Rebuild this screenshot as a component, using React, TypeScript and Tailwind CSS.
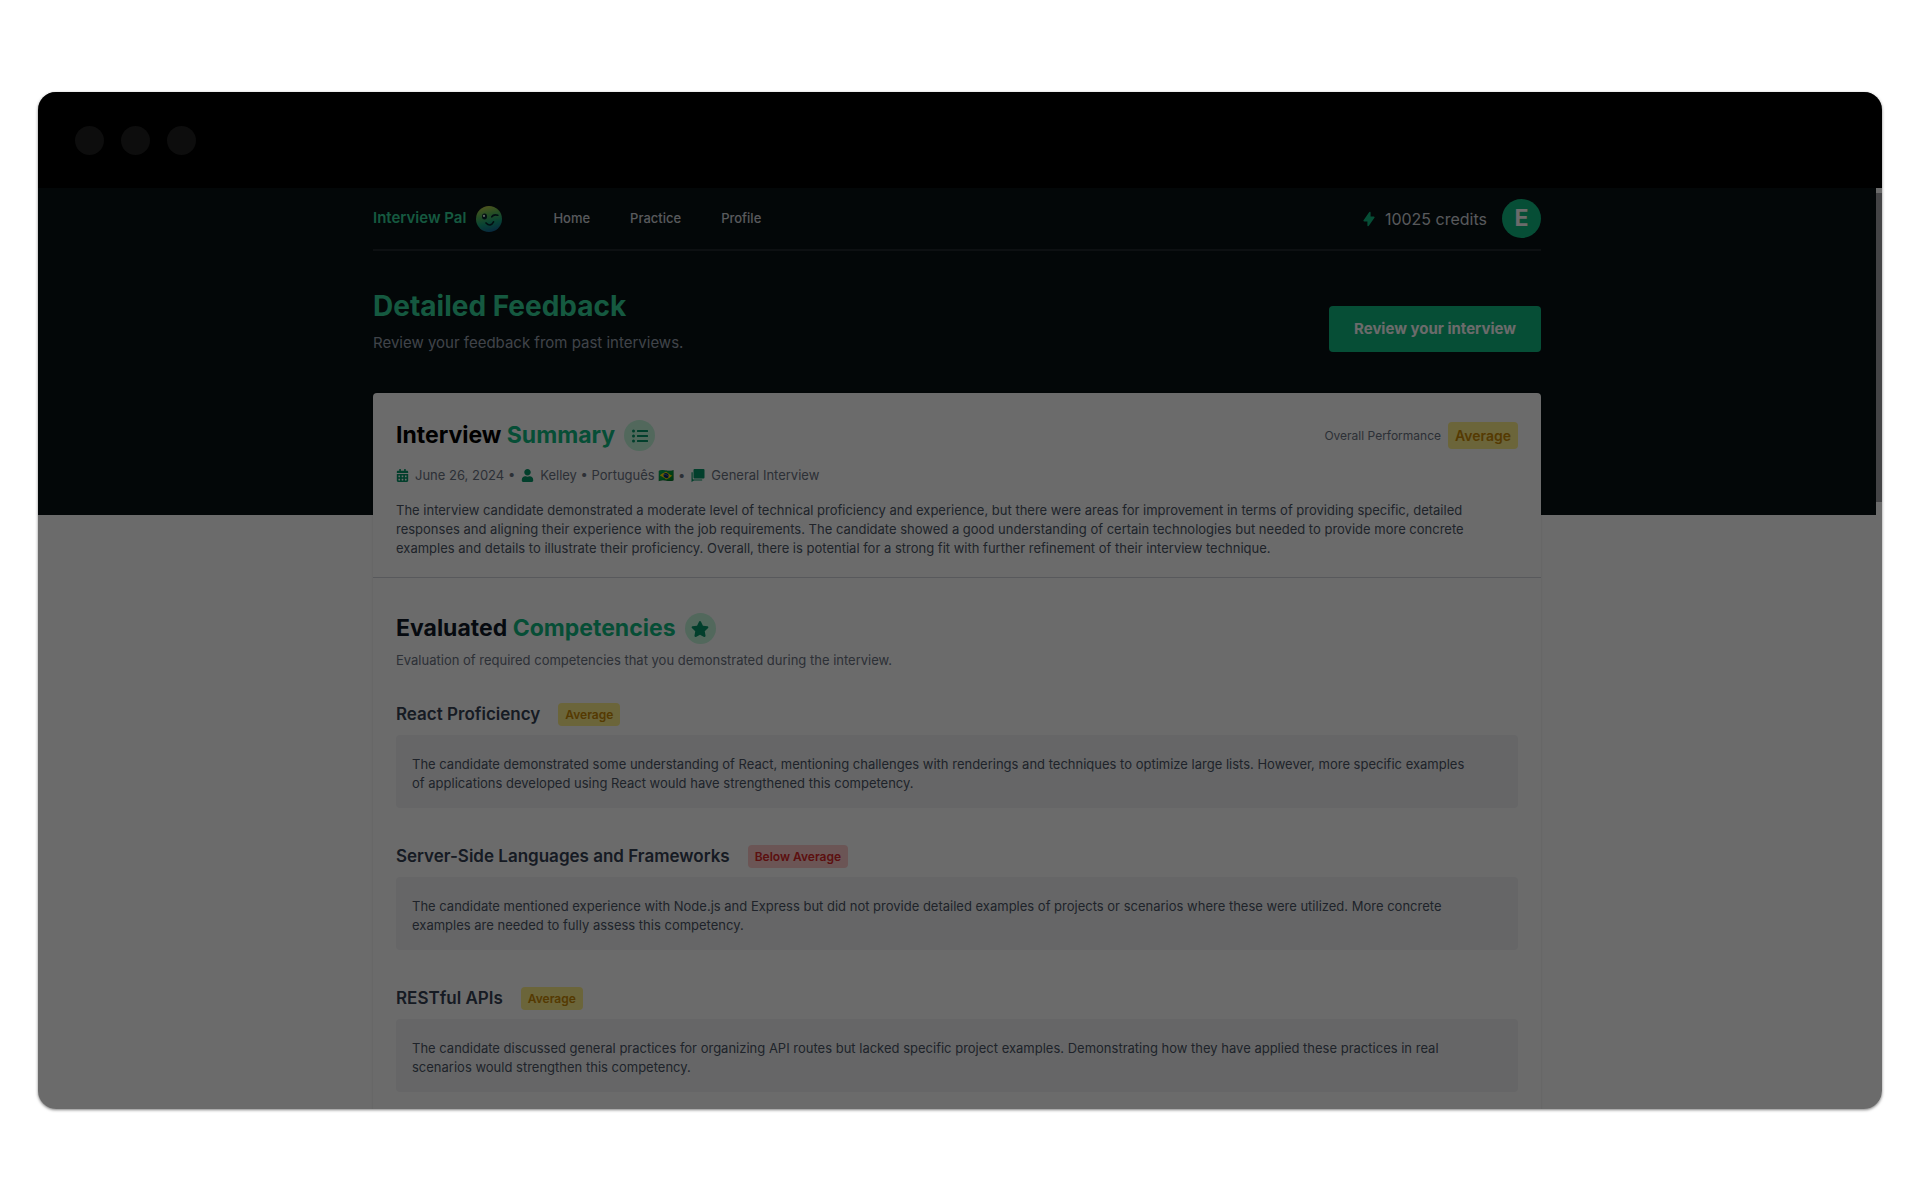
import { FaCalendarAlt, FaUser, FaListUl, FaStar } from "react-icons/fa";
import { HiLightningBolt } from "react-icons/hi";

type Rating = "Average" | "Below Average";

const competencies: { title: string; rating: Rating; text: string }[] = [
  {
    title: "React Proficiency",
    rating: "Average",
    text: "The candidate demonstrated some understanding of React, mentioning challenges with renderings and techniques to optimize large lists. However, more specific examples of applications developed using React would have strengthened this competency.",
  },
  {
    title: "Server-Side Languages and Frameworks",
    rating: "Below Average",
    text: "The candidate mentioned experience with Node.js and Express but did not provide detailed examples of projects or scenarios where these were utilized. More concrete examples are needed to fully assess this competency.",
  },
  {
    title: "RESTful APIs",
    rating: "Average",
    text: "The candidate discussed general practices for organizing API routes but lacked specific project examples. Demonstrating how they have applied these practices in real scenarios would strengthen this competency.",
  },
];

const ratingStyle: Record<Rating, string> = {
  Average: "bg-[#fef08a] text-[#ca8a04]",
  "Below Average": "bg-[#fecaca] text-[#dc2626]",
};

function Logo() {
  return (
    <svg viewBox="0 0 26 26" className="size-[26px]" aria-hidden="true">
      <defs>
        <linearGradient id="face" x1="0.4" y1="0" x2="0.65" y2="1">
          <stop offset="0" stopColor="#b9c94a" />
          <stop offset="0.3" stopColor="#5fbb55" />
          <stop offset="0.65" stopColor="#14a07c" />
          <stop offset="1" stopColor="#155f96" />
        </linearGradient>
      </defs>
      <circle cx="13" cy="13" r="13" fill="url(#face)" />
      <ellipse cx="8.500" cy="10.500" rx="2.500" ry="2.900" fill="#06232b" />
      <circle cx="8" cy="9.900" r="1.100" fill="#e8fff4" />
      <path d="M15.800 10.800q1.700-2.800 6-1.600" fill="none" stroke="#06232b" strokeWidth="1.700" strokeLinecap="round" strokeLinejoin="round" />
      <path d="M10 17q4.500 4.500 7.500-1.200" fill="none" stroke="#06232b" strokeWidth="1.700" strokeLinecap="round" />
    </svg>
  );
}

function ChatIcon() {
  return (
    <svg viewBox="0 0 14 14" className="size-[14px] text-[#059669]" fill="currentColor" aria-hidden="true">
      <path d="M3.500 1h9a1 1 0 0 1 1 1v7.500a1 1 0 0 1-1 1h-9a1 1 0 0 1-1-1V2a1 1 0 0 1 1-1z" />
      <path d="M.5 4.200h1.200v6.300a.9.9 0 0 0 .9.900h8.600v1H3L.5 14z" />
    </svg>
  );
}

export default function App() {
  return (
    <div className="h-screen bg-white px-[38px] pt-[92px] pb-[91px] font-['Inter',sans-serif]">
      <div className="relative flex h-full flex-col overflow-hidden rounded-[18px] bg-white shadow-[0_1px_3px_rgba(0,0,0,0.5)]">
        <div className="flex h-24 shrink-0 items-center gap-[17px] bg-black px-[37px]">
          <span className="size-[29px] rounded-full bg-[#1f1f1f]" />
          <span className="size-[29px] rounded-full bg-[#1f1f1f]" />
          <span className="size-[29px] rounded-full bg-[#1f1f1f]" />
        </div>

        <div className="flex min-h-0 flex-1">
          <div className="min-w-0 flex-1 overflow-hidden">
            <header className="bg-[#081113] pb-[163px]">
              <div className="mx-auto max-w-[1168px]">
                <nav className="flex h-[63px] items-center border-b-2 border-[#1f272c]">
                  <a href="#" className="flex items-center gap-[10px] text-[15px] font-semibold text-[#34d399]">
                    Interview Pal
                    <Logo />
                  </a>
                  <div className="ml-[51px] flex gap-10 text-[13px] font-medium text-gray-300">
                    <a href="#">Home</a>
                    <a href="#">Practice</a>
                    <a href="#">Profile</a>
                  </div>
                  <div className="ml-auto flex items-center text-[16px] text-gray-300">
                    <HiLightningBolt className="mr-2 size-4 text-[#10b981]" />
                    10025 credits
                    <button className="ml-[15px] size-[39px] rounded-full bg-[#10b981] text-[23px] font-bold text-white">E</button>
                  </div>
                </nav>
                <div className="flex items-end justify-between pt-[36px]">
                  <div>
                    <h1 className="text-[28px] leading-[39px] font-bold text-[#34d399]">Detailed Feedback</h1>
                    <p className="mt-2 text-[15px] leading-[18px] text-gray-400">Review your feedback from past interviews.</p>
                  </div>
                  <button className="h-[46px] rounded bg-[#10b981] px-[25px] text-[15px] font-bold text-white">
                    Review your interview
                  </button>
                </div>
              </div>
            </header>

            <main className="mx-auto -mt-[122px] max-w-[1168px] rounded bg-white shadow-[0_0_2px_rgba(0,0,0,0.15)]">
              <section className="border-b border-gray-300 px-[23px] pt-[27px] pb-[19px]">
                <div className="flex items-center justify-between">
                  <h2 className="flex items-center text-[23px] leading-[31px] font-bold">
                    <span>Interview <span className="text-[#10b981]">Summary</span></span>
                    <span className="ml-[9px] flex size-[31px] items-center justify-center rounded-full bg-[#c3f7dc] text-[#059669]">
                      <FaListUl className="size-4" />
                    </span>
                  </h2>
                  <div className="flex items-center gap-[7px]">
                    <span className="text-[12px] text-gray-500">Overall Performance</span>
                    <span className="rounded bg-[#fef08a] px-[7px] text-[14px] leading-[27px] font-semibold text-[#ca8a04]">Average</span>
                  </div>
                </div>
                <div className="mt-[14px] flex items-center gap-[6px] text-[13px] leading-5 text-gray-500">
                  <FaCalendarAlt className="size-[13px] text-[#059669]" />
                  <span>June 26, 2024 •</span>
                  <FaUser className="size-[13px] text-[#059669]" />
                  <span>Kelley • Português 🇧🇷 •</span>
                  <ChatIcon />
                  <span>General Interview</span>
                </div>
                <p className="mt-4 text-[13px] leading-[19px] text-gray-600">
                  The interview candidate demonstrated a moderate level of technical proficiency and experience, but there were areas for improvement in terms of providing specific, detailed responses and aligning their experience with the job requirements. The candidate showed a good understanding of certain technologies but needed to provide more concrete examples and details to illustrate their proficiency. Overall, there is potential for a strong fit with further refinement of their interview technique.
                </p>
              </section>

              <section className="px-[23px] pt-[35px] pb-20">
                <h2 className="flex items-center text-[23px] leading-[31px] font-bold text-gray-900">
                  <span>Evaluated <span className="text-[#10b981]">Competencies</span></span>
                  <span className="ml-[9px] flex size-[31px] items-center justify-center rounded-full bg-[#c3f7dc] text-[#059669]">
                    <FaStar className="size-[18px]" />
                  </span>
                </h2>
                <p className="mt-[6px] text-[13px] leading-5 text-gray-500">
                  Evaluation of required competencies that you demonstrated during the interview.
                </p>
                <div className="mt-[33px] flex flex-col gap-[37px]">
                  {competencies.map((c) => (
                    <article key={c.title}>
                      <div className="flex items-center gap-[18px]">
                        <h3 className="text-[17px] leading-[23px] font-semibold text-gray-700">{c.title}</h3>
                        <span className={`rounded px-[7px] text-[12px] leading-[23px] font-semibold ${ratingStyle[c.rating]}`}>{c.rating}</span>
                      </div>
                      <p className="mt-[9px] rounded bg-gray-100 pt-5 pr-12 pb-[15px] pl-4 text-[13px] leading-[19px] text-gray-600">{c.text}</p>
                    </article>
                  ))}
                </div>
              </section>
            </main>
          </div>
          <div className="w-[6px] bg-white pt-[5px]">
            <div className="h-[309px] bg-[#a3a3a6]" />
          </div>
        </div>
        <div className="pointer-events-none absolute inset-0 bg-black/58" />
      </div>
    </div>
  );
}
